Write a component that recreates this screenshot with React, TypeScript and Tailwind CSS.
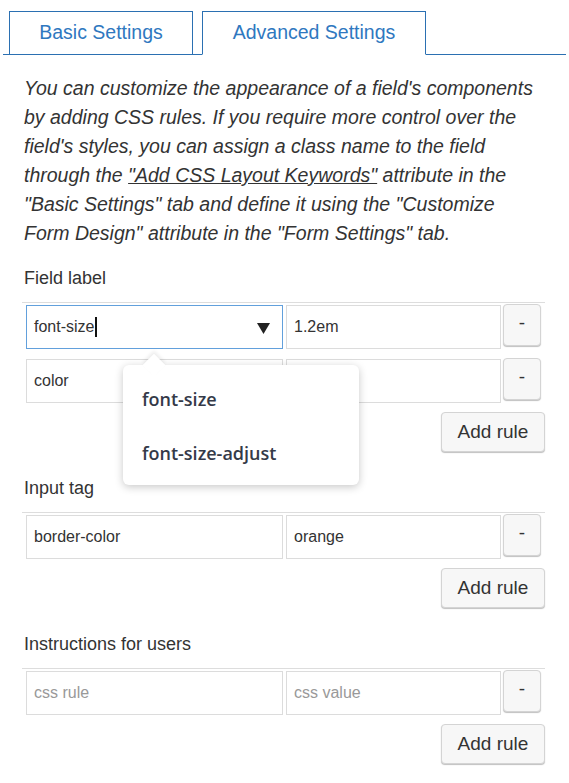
const tabBlue = "border-[#2b70b2]";

type Rule = { name: string; value: string };

function RuleRow({ rule, focused }: { rule: Rule; focused?: boolean }) {
  return (
    <div className="flex items-start pl-[4px]">
      <div
        className={
          focused
            ? "relative flex h-[44px] w-[257px] items-center border border-[#62a0dc] bg-white pl-[7px] text-[16px] text-[#333]"
            : "flex h-[44px] w-[257px] items-center border border-[#dcdcdc] bg-white pl-[7px] text-[16px] text-[#333]"
        }
      >
        {rule.name ? (
          <span>{rule.name}</span>
        ) : (
          <span className="text-[#999]">css rule</span>
        )}
        {focused && (
          <>
            <span className="ml-px inline-block h-[20px] w-[2px] bg-[#111]" />
            <svg
              className="absolute right-[12px] top-[17px]"
              width="13"
              height="11"
              viewBox="0 0 13 11"
            >
              <polygon points="0,0 13,0 6.5,11" fill="#222" />
            </svg>
          </>
        )}
      </div>
      <div className="ml-[3px] flex h-[44px] w-[215px] items-center border border-[#dcdcdc] bg-white pl-[7px] text-[16px] text-[#333]">
        {rule.value ? (
          <span>{rule.value}</span>
        ) : rule.name ? null : (
          <span className="text-[#999]">css value</span>
        )}
      </div>
      <button className="-mt-px ml-[2px] flex h-[42px] w-[38px] items-center justify-center rounded-[4px] border border-[#d4d4d4] bg-[#f7f7f7] pb-[3px] text-[19px] text-[#333] shadow-[0_1px_1px_rgba(0,0,0,0.25)]">
        -
      </button>
    </div>
  );
}

function AddRule() {
  return (
    <div className="mt-[9px] flex justify-end">
      <button className="h-[40px] w-[104px] rounded-[4px] border border-[#d4d4d4] bg-[#f7f7f7] text-[19px] text-[#333] shadow-[0_1px_1px_rgba(0,0,0,0.25)]">
        Add rule
      </button>
    </div>
  );
}

function Section({
  label,
  rules,
  top,
  popup,
}: {
  label: string;
  rules: Rule[];
  top: string;
  popup?: boolean;
}) {
  return (
    <div className={top}>
      <div className="pl-[2px] text-[18px] leading-[24px] text-[#333]">{label}</div>
      <div className="relative mt-[12px] border-t border-[#dddddd] pt-[2px]">
        <div className="flex flex-col gap-[10px]">
          {rules.map((r, i) => (
            <RuleRow key={i} rule={r} focused={popup && i === 0} />
          ))}
        </div>
        <AddRule />
        {popup && (
          <div className="absolute left-[101px] top-[62px] h-[120px] w-[236px] rounded-[6px] bg-white pt-[7px] shadow-[0_2px_8px_rgba(0,0,0,0.22)] font-['Open_Sans',sans-serif] text-[18px] font-semibold text-[#343a48]">
            <div className="absolute -top-[8px] left-[23px] h-[16px] w-[16px] rotate-45 bg-white shadow-[-2px_-2px_4px_rgba(0,0,0,0.08)]" />
            <div className="relative flex h-[54px] items-center pl-[19px]">font-size</div>
            <div className="relative flex h-[54px] items-center pl-[19px]">font-size-adjust</div>
          </div>
        )}
      </div>
    </div>
  );
}

export default function App() {
  return (
    <div className="min-h-screen w-[569px] bg-white font-['Liberation_Sans',Arial,sans-serif]">
      <div className={`mx-[3px] flex gap-[9px] border-b pl-[6px] pt-[11px] ${tabBlue}`}>
        <div
          className={`-mb-px flex h-[44px] w-[184px] items-center justify-center border ${tabBlue} text-[19.5px] text-[#2f78bf]`}
        >
          Basic Settings
        </div>
        <div
          className={`-mb-px flex h-[44px] w-[224px] items-center justify-center border ${tabBlue} border-b-white bg-white text-[19.5px] text-[#2f78bf]`}
        >
          Advanced Settings
        </div>
      </div>

      <div className="w-[545px] pl-[22px]">
        <p className="pl-[2px] pt-[19px] text-[19.5px] italic leading-[29px] text-[#333]">
          You can customize the appearance of a field's components
          <br />
          by adding CSS rules. If you require more control over the
          <br />
          field's styles, you can assign a class name to the field
          <br />
          through the <span className="underline">"Add CSS Layout Keywords"</span> attribute in the
          <br />
          "Basic Settings" tab and define it using the "Customize
          <br />
          Form Design" attribute in the "Form Settings" tab.
        </p>

        <Section
          top="mt-[18px]"
          label="Field label"
          popup
          rules={[
            { name: "font-size", value: "1.2em" },
            { name: "color", value: "" },
          ]}
        />
        <Section
          top="mt-[24px]"
          label="Input tag"
          rules={[{ name: "border-color", value: "orange" }]}
        />
        <Section
          top="mt-[24px]"
          label="Instructions for users"
          rules={[{ name: "", value: "" }]}
        />
      </div>
    </div>
  );
}
